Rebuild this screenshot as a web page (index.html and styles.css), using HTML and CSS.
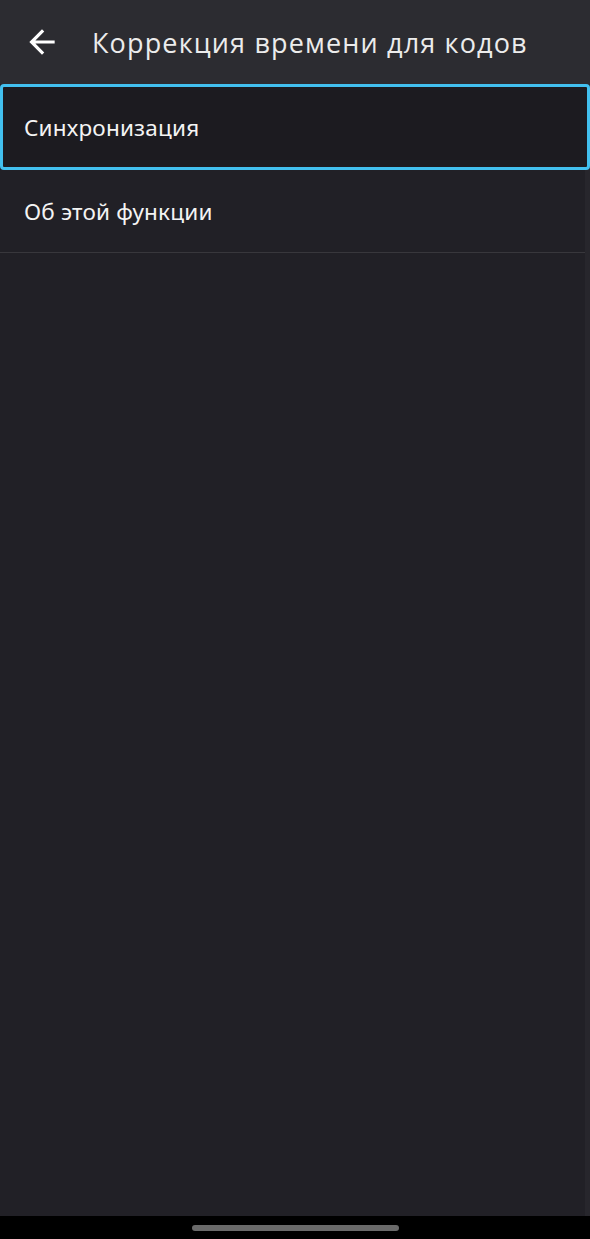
FILE: index.html
```html
<!DOCTYPE html>
<html lang="ru">
<head>
<meta charset="utf-8">
<title>Коррекция времени для кодов</title>
<link rel="stylesheet" href="styles.css">
</head>
<body>
<div class="screen">
  <header class="appbar">
    <span class="back">
      <svg viewBox="0 0 24 24" width="38" height="38"><path fill="#ffffff" d="M20 11H7.83l5.59-5.59L12 4l-8 8 8 8 1.41-1.41L7.83 13H20v-2z"/></svg>
    </span>
    <h1 class="title">Коррекция времени для кодов</h1>
  </header>
  <main class="content">
    <div class="item item-focused">Синхронизация</div>
    <div class="item item-last">Об этой функции</div>
    <div class="fill"></div>
  </main>
  <footer class="navbar"><span class="handle"></span></footer>
</div>
</body>
</html>
```
FILE: styles.css
```css
html, body {
  margin: 0;
  padding: 0;
  height: 100%;
  background: #000;
}
.screen {
  display: flex;
  flex-direction: column;
  height: 100vh;
  font-family: "Noto Sans", "Open Sans", sans-serif;
  color: #f2f2f2;
}
.appbar {
  height: 84px;
  flex: none;
  background: #2c2c31;
  display: flex;
  align-items: center;
}
.back {
  width: 38px;
  height: 38px;
  margin-left: 23px;
  margin-right: 31px;
  display: flex;
}
.title {
  margin: 0;
  font-family: "Open Sans", "Noto Sans", sans-serif;
  font-weight: 400;
  font-size: 27px;
  color: #ececec;
  letter-spacing: 1.15px;
  white-space: nowrap;
}
.content {
  flex: 1;
  display: flex;
  flex-direction: column;
  background: #212026;
  border-right: 5px solid #27262c;
}
.item {
  display: flex;
  align-items: center;
  padding-left: 24px;
  font-size: 22.5px;
  color: #f4f4f4;
  height: 83px;
  box-sizing: border-box;
  letter-spacing: 0.2px;
}
.item-focused {
  height: 86px;
  background: #1c1b20;
  border: 3px solid #42c0ef;
  border-radius: 4px;
  padding-left: 21px;
  margin-right: -5px;
}
.item-last {
  border-bottom: 1px solid #38373c;
}
.fill {
  flex: 1;
}
.navbar {
  height: 23px;
  flex: none;
  background: #000;
  display: flex;
  justify-content: center;
  align-items: center;
}
.handle {
  width: 207px;
  height: 6px;
  border-radius: 3px;
  background: #6a6a6a;
}
```
